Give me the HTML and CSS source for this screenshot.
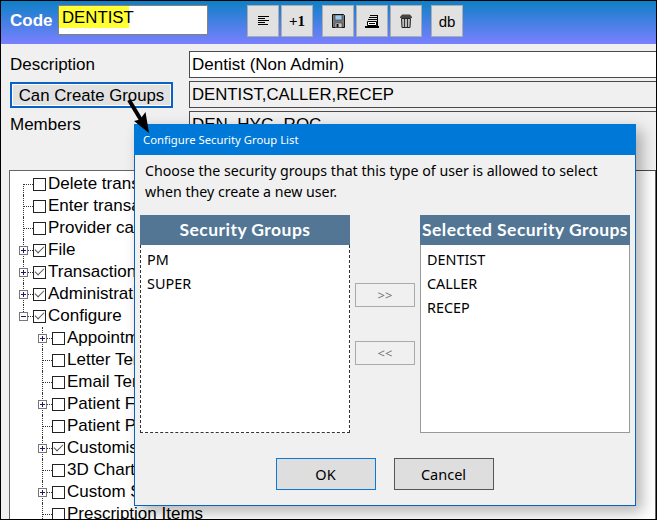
FILE: index.html
```html
<!DOCTYPE html>
<html lang="en">
<head>
<meta charset="utf-8">
<title>Configure Security Group List</title>
<link rel="stylesheet" href="styles.css">
</head>
<body>
<div class="frame">
  <header class="topbar">
    <label class="code-label">Code</label>
    <div class="code-input"><span class="hl">DENTIST</span></div>
    <div class="tools">
      <div class="tool-group">
        <button class="tool"><svg width="11" height="10" viewBox="0 0 11 10"><path d="M0 .5h11M0 2.500h7M0 4.500h11M0 6.500h7M0 8.500h10" stroke="#000" fill="none"/></svg></button>
        <button class="tool plus">+1</button>
      </div>
      <div class="tool-group">
        <button class="tool"><svg width="13" height="14" viewBox="0 0 13 14"><path d="M.5.500h11l1 1v12H.5z" fill="#777" stroke="#111"/><path d="M3 1h7v5H3z" fill="#9cc8ec" stroke="#222" stroke-width=".5"/><path d="M3 9h7v4.500H3z" fill="#c8c8c8" stroke="#222" stroke-width=".5"/><path d="M4.500 10h2v3h-2z" fill="#111"/></svg></button>
        <button class="tool"><svg width="14" height="13" viewBox="0 0 14 13"><path d="M5 .5h8M4 2.500h9M3 4.500h9" stroke="#000" fill="none"/><path d="M2.500 6.500h9v4h-9z" fill="#fff" stroke="#000"/><path d="M4 8.500h6" stroke="#000"/><path d="M0 11h14v2H0z" fill="#000"/><path d="M12.500 1v10" stroke="#000"/></svg></button>
        <button class="tool"><svg width="12" height="14" viewBox="0 0 12 14"><path d="M0 3 2 .5h8L12 3v1H0z" fill="#444"/><path d="M1.500 4.500h9l-.5 9H2z" fill="#bbb" stroke="#222"/><path d="M4.500 5v8M7.500 5v8" stroke="#333"/></svg></button>
      </div>
      <button class="tool db">db</button>
    </div>
  </header>

  <section class="form">
    <div class="form-row">
      <div class="side"><span class="lbl">Description</span></div>
      <div class="field white">Dentist (Non Admin)</div>
    </div>
    <div class="form-row">
      <div class="side"><button class="create">Can Create Groups</button></div>
      <div class="field dense">DENTIST,CALLER,RECEP</div>
    </div>
    <div class="form-row">
      <div class="side"><span class="lbl">Members</span></div>
      <div class="field tall">DEN, HYG, ROC</div>
    </div>
  </section>

  <section class="tree">
    <div class="row"><i class="guide first"></i><i class="stub"></i><i class="cb"></i><span>Delete transactions</span></div>
    <div class="row"><i class="guide"></i><i class="stub"></i><i class="cb"></i><span>Enter transactions</span></div>
    <div class="row"><i class="guide"></i><i class="stub"></i><i class="cb"></i><span>Provider calendar</span></div>
    <div class="row"><i class="guide"></i><i class="exp closed"></i><i class="cb on"></i><span>File</span></div>
    <div class="row"><i class="guide"></i><i class="exp closed"></i><i class="cb on"></i><span>Transactions</span></div>
    <div class="row"><i class="guide"></i><i class="exp closed"></i><i class="cb on"></i><span>Administration</span></div>
    <div class="row"><i class="guide last"></i><i class="exp"></i><i class="cb on"></i><span>Configure</span></div>
    <div class="row sub"><i class="guide g2"></i><i class="exp closed"></i><i class="cb"></i><span>Appointments</span></div>
    <div class="row sub"><i class="guide g2"></i><i class="stub"></i><i class="cb"></i><span>Letter Templates</span></div>
    <div class="row sub"><i class="guide g2"></i><i class="stub"></i><i class="cb"></i><span>Email Templates</span></div>
    <div class="row sub"><i class="guide g2"></i><i class="exp closed"></i><i class="cb"></i><span>Patient Forms</span></div>
    <div class="row sub"><i class="guide g2"></i><i class="stub"></i><i class="cb"></i><span>Patient Photos</span></div>
    <div class="row sub"><i class="guide g2"></i><i class="exp closed"></i><i class="cb on"></i><span>Customise</span></div>
    <div class="row sub"><i class="guide g2"></i><i class="stub"></i><i class="cb"></i><span>3D Charting</span></div>
    <div class="row sub"><i class="guide g2"></i><i class="exp closed"></i><i class="cb"></i><span>Custom Screens</span></div>
    <div class="row sub"><i class="guide g2"></i><i class="stub"></i><i class="cb"></i><span>Prescription Items</span></div>
  </section>

  <div class="dialog">
    <div class="titlebar">Configure Security Group List</div>
    <p class="intro">Choose the security groups that this type of user is allowed to select<br>when they create a new user.</p>
    <div class="lists">
      <div class="list">
        <div class="list-head">Security Groups</div>
        <ul class="list-body focus"><li>PM</li><li>SUPER</li></ul>
      </div>
      <div class="movers">
        <button class="move">&gt;&gt;</button>
        <button class="move">&lt;&lt;</button>
      </div>
      <div class="list">
        <div class="list-head">Selected Security Groups</div>
        <ul class="list-body"><li>DENTIST</li><li>CALLER</li><li>RECEP</li></ul>
      </div>
    </div>
    <div class="actions">
      <button class="act ok">OK</button>
      <button class="act">Cancel</button>
    </div>
  </div>

  <svg class="arrow" width="34" height="42" viewBox="0 0 34 42"><path d="M4 3 19 28" stroke="#000" stroke-width="4" fill="none"/><path d="M24 36 9 24 15 22.500 20.500 15z" fill="#000"/></svg>
</div>
</body>
</html>
```

FILE: styles.css
```css
* { box-sizing: border-box; }
html, body { margin: 0; padding: 0; background: #fff; }
.frame {
  position: relative;
  width: 657px;
  height: 520px;
  overflow: hidden;
  border: 1px solid #000;
  background: #f0f0f0;
  font-family: "Liberation Sans", Arial, sans-serif;
  font-size: 17px;
  color: #000;
}
button { font-family: inherit; margin: 0; padding: 0; }

.topbar {
  display: flex;
  align-items: flex-start;
  height: 43px;
  padding: 4px 0 0 9px;
  background: linear-gradient(#0f80c6, #7a80ff);
}
.code-label {
  width: 48px;
  margin-top: 6px;
  color: #fff;
  font-weight: bold;
  font-size: 17px;
  line-height: 19px;
}
.code-input {
  width: 150px;
  height: 30px;
  background: #fff;
  border: 1px solid #8a8078;
  font-size: 16.800px;
}
.hl {
  display: block;
  width: 70px;
  height: 22px;
  padding-left: 3px;
  background: #ffff33;
  line-height: 24px;
  white-space: nowrap;
}
.tools { display: flex; margin-left: 39px; gap: 9px; }
.tool-group { display: flex; gap: 2px; }
.tool {
  display: flex;
  align-items: center;
  justify-content: center;
  width: 32px;
  height: 32px;
  background: #e1e1e1;
  border: 1px solid #adadad;
  color: #000;
}
.plus { font-family: "Liberation Serif", serif; font-weight: bold; font-size: 15px; }
.db { font-size: 15px; }

.form { display: flex; flex-direction: column; padding-top: 7px; height: 126px; }
.form-row { display: flex; flex-shrink: 0; margin-bottom: 3px; }
.side { width: 188px; padding-left: 9px; flex-shrink: 0; }
.lbl { display: block; line-height: 27px; }
.field {
  flex: 1;
  height: 27px;
  padding-left: 2px;
  border: 1px solid #4a4a4a;
  border-right: 0;
  line-height: 25px;
  white-space: nowrap;
}
.white { background: #fff; }
.dense { font-size: 16.750px; }
.tall { height: 60px; }
.create {
  display: block;
  width: 163px;
  height: 26px;
  margin-top: 1px;
  background: #e1e1e1;
  border: 2px solid #0a63c4;
  box-shadow: inset 0 0 0 1px #fff;
  font-size: 16.800px;
  line-height: 21px;
  color: #000;
}

.tree {
  margin-left: 8px;
  height: 400px;
  padding-top: 2px;
  background: #fff;
  border: 1px solid #666;
  border-bottom: 0;
  overflow: hidden;
}
.row {
  position: relative;
  display: flex;
  align-items: center;
  height: 22px;
  padding-left: 9px;
  white-space: nowrap;
}
.sub { padding-left: 28px; }
.guide { position: absolute; left: 13px; top: 0; bottom: 0; border-left: 1px dotted #333; }
.first { top: 50%; }
.last { bottom: 50%; }
.g2 { left: 32px; }
.stub { flex: none; width: 10px; margin-left: 4px; height: 0; border-top: 1px dotted #333; }
.exp {
  position: relative;
  flex: none;
  width: 9px;
  height: 9px;
  margin-right: 5px;
  background: linear-gradient(#1a1a6a, #1a1a6a) center / 5px 1px no-repeat #fff;
  border: 1px solid #777;
}
.exp::after {
  content: "";
  position: absolute;
  left: 8px;
  top: 3px;
  width: 5px;
  border-top: 1px dotted #333;
}
.closed {
  background:
    linear-gradient(#1a1a6a, #1a1a6a) center / 5px 1px no-repeat,
    linear-gradient(#1a1a6a, #1a1a6a) center / 1px 5px no-repeat,
    #fff;
}
.cb {
  position: relative;
  flex: none;
  width: 13px;
  height: 13px;
  margin-right: 2px;
  background: #fff;
  border: 1px solid #222;
}
.on::after {
  content: "";
  position: absolute;
  left: 1px;
  top: 1px;
  width: 8px;
  height: 4px;
  border-left: 1.500px solid #555;
  border-bottom: 1.500px solid #555;
  transform: rotate(-45deg);
}

.dialog {
  position: absolute;
  left: 133px;
  top: 123px;
  width: 502px;
  height: 382px;
  display: flex;
  flex-direction: column;
  background: #f0f0f0;
  border: 1px solid #0b63c0;
  box-shadow: 6px 6px 14px rgba(0, 0, 0, 0.3);
  font-family: "Noto Sans", sans-serif;
}
.titlebar {
  height: 31px;
  margin: -1px -1px 0;
  padding-left: 9px;
  background: #0078d7;
  color: #fff;
  font-size: 11.300px;
  line-height: 32px;
}
.intro { margin: 5px 0 0 10px; font-size: 14.200px; line-height: 21px; height: 42px; }
.lists { display: flex; margin: 13px 5px 0; height: 218px; }
.list { width: 210px; display: flex; flex-direction: column; flex-shrink: 0; }
.list-head {
  height: 30px;
  background: #527694;
  color: #fff;
  font-family: Lato, sans-serif;
  font-weight: bold;
  font-size: 17.500px;
  letter-spacing: 0.450px;
  line-height: 30px;
  text-align: center;
  white-space: nowrap;
}
.list-body {
  flex: 1;
  margin: 0;
  padding: 3px 0 0 6px;
  list-style: none;
  background: #fff;
  border: 1px solid #999;
  border-top: 0;
  font-size: 14.400px;
}
.focus { border: 1px dashed #333; border-top: 0; }
.list-body li { height: 24px; line-height: 24px; }
.movers { width: 70px; display: flex; flex-direction: column; align-items: center; padding-top: 68px; gap: 34px; }
.move {
  width: 60px;
  height: 24px;
  background: #f0f0f0;
  border: 1px solid #aaa;
  color: #777;
  font-size: 13px;
}
.actions { display: flex; justify-content: center; gap: 18px; margin-top: 25px; padding-right: 1px; }
.act {
  width: 100px;
  height: 32px;
  background: #dedede;
  border: 1px solid #555;
  font-size: 14.500px;
  color: #000;
}
.ok { border-color: #0a7ad8; }

.arrow { position: absolute; left: 124px; top: 96px; }
```
